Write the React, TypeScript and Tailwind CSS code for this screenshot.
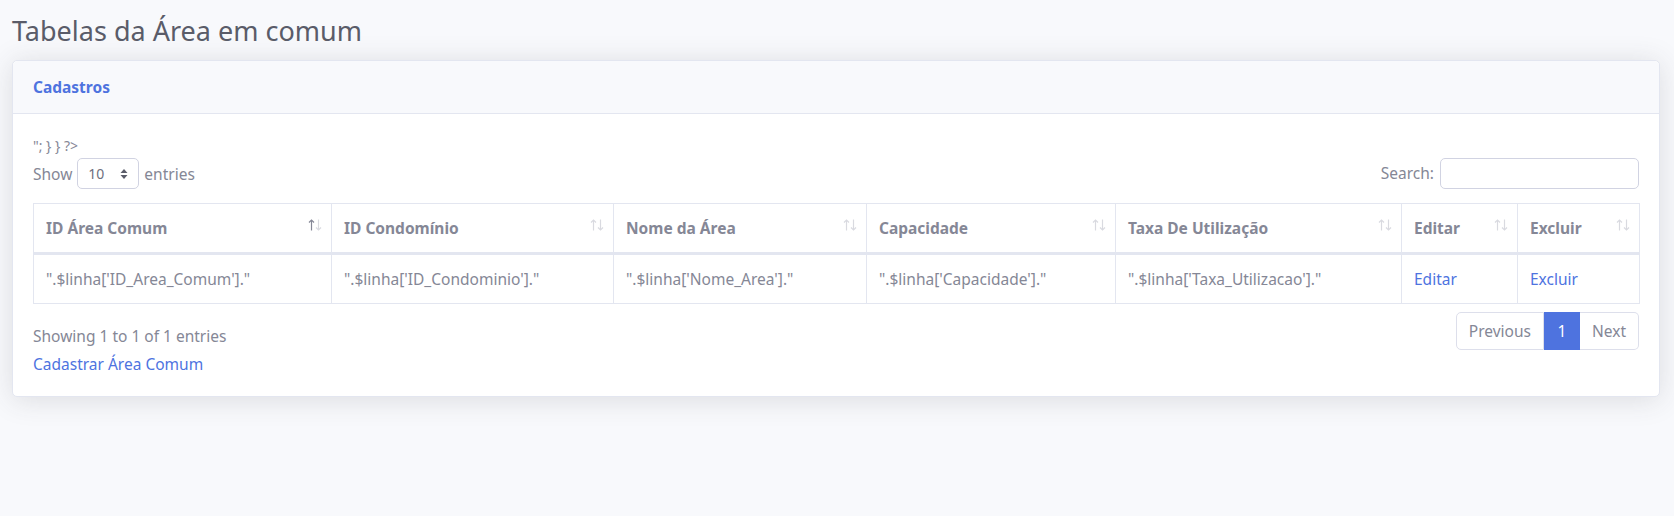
import React from 'react';

const columns = [
  { label: 'ID Área Comum', w: 'w-[298px]', active: true },
  { label: 'ID Condomínio', w: 'w-[282px]' },
  { label: 'Nome da Área', w: 'w-[253px]' },
  { label: 'Capacidade', w: 'w-[249px]' },
  { label: 'Taxa De Utilização', w: 'w-[286px]' },
  { label: 'Editar', w: 'w-[116px]' },
  { label: 'Excluir', w: 'w-[122px]' },
];

const row = [
  `".$linha['ID_Area_Comum']."`,
  `".$linha['ID_Condominio']."`,
  `".$linha['Nome_Area']."`,
  `".$linha['Capacidade']."`,
  `".$linha['Taxa_Utilizacao']."`,
];

function SortArrows({ active }: { active?: boolean }) {
  return (
    <svg width="14" height="12" viewBox="0 0 14 12" fill="none" strokeWidth="1.2" className="-mt-[6px] shrink-0">
      <g stroke={active ? '#858796' : '#d9dae0'}>
        <path d="M3.5 11.5 V1" />
        <path d="M1 3.5 L3.5 1 L6 3.5" />
      </g>
      <g stroke="#d9dae0">
        <path d="M10.5 0.5 V11" />
        <path d="M8 8.5 L10.5 11 L13 8.5" />
      </g>
    </svg>
  );
}

export default function App() {
  return (
    <div className="min-h-[516px] bg-[#f8f9fc] font-['Noto_Sans',sans-serif] text-[15.5px] text-[#858796]">
      {/* topbar shadow */}
      <div className="h-0 shadow-[0_0.15rem_1.75rem_0_rgba(58,59,69,0.15)]" />

      <div className="pl-3 pr-[14px] pt-[15px]">
        <h1 className="text-[27px] leading-[1.2] font-normal text-[#5a5c69] mb-[13px]">
          Tabelas da Área em comum
        </h1>

        <div className="bg-white border border-[#e3e6f0] rounded-[5px] shadow-[0_0.15rem_1.75rem_0_rgba(58,59,69,0.15)]">
          {/* Card header */}
          <div className="bg-[#f8f9fc] border-b border-[#e3e6f0] rounded-t-[5px] px-5 py-[13px]">
            <h6 className="text-[15.5px] leading-[26px] font-bold text-[#4e73df]">Cadastros</h6>
          </div>

          {/* Card body */}
          <div className="p-5">
            <div className="leading-6 text-[14px]">"; {'}'} {'}'} ?&gt;</div>

            <div className="flex items-center justify-between">
              <label className="flex items-center gap-[5px] leading-6">
                Show
                <span className="flex items-center justify-between w-[62px] h-[31px] border border-[#d1d3e2] rounded-[5px] pl-[10px] pr-[10px] text-[14px] text-[#6e707e]">
                  10
                  <svg width="8" height="12" viewBox="0 0 8 12" className="fill-[#5a5c69]">
                    <path d="M4 1 L7.5 5 H0.5 Z" />
                    <path d="M4 11 L7.5 7 H0.5 Z" />
                  </svg>
                </span>
                entries
              </label>
              <label className="flex items-center gap-[6px]">
                Search:
                <input className="w-[199px] h-[31px] border border-[#d1d3e2] rounded-[5px] outline-none px-2" />
              </label>
            </div>

            <table className="table-fixed w-full mt-[14px] border-collapse border border-[#e3e6f0]">
              <thead>
                <tr>
                  {columns.map((c) => (
                    <th
                      key={c.label}
                      className={`${c.w} border border-[#e3e6f0] border-b-[3px] text-left font-bold pl-3 pr-[9px] py-3 leading-6 whitespace-nowrap`}
                    >
                      <div className="flex items-center justify-between">
                        <span>{c.label}</span>
                        <SortArrows active={c.active} />
                      </div>
                    </th>
                  ))}
                </tr>
              </thead>
              <tbody>
                <tr>
                  {row.map((v) => (
                    <td key={v} className="border border-[#e3e6f0] px-3 py-3 leading-6 whitespace-nowrap">
                      {v}
                    </td>
                  ))}
                  <td className="border border-[#e3e6f0] px-3 py-3 leading-6">
                    <a className="text-[#4e73df]">Editar</a>
                  </td>
                  <td className="border border-[#e3e6f0] px-3 py-3 leading-6">
                    <a className="text-[#4e73df]">Excluir</a>
                  </td>
                </tr>
              </tbody>
            </table>

            <div className="flex items-start justify-between mt-[8px]">
              <div className="pt-[12px] leading-6">Showing 1 to 1 of 1 entries</div>
              <ul className="flex">
                <li className="px-3 py-[8px] leading-5 border border-[#dddfeb] rounded-l-[5px] bg-white">Previous</li>
                <li className="w-[36px] text-center py-[8px] leading-5 border border-[#4e73df] bg-[#4e73df] text-white">1</li>
                <li className="px-3 py-[8px] leading-5 border border-[#dddfeb] border-l-0 rounded-r-[5px] bg-white">Next</li>
              </ul>
            </div>

            <a className="block leading-6 text-[#4e73df] mt-[2px]">Cadastrar Área Comum</a>
          </div>
        </div>
      </div>
    </div>
  );
}
